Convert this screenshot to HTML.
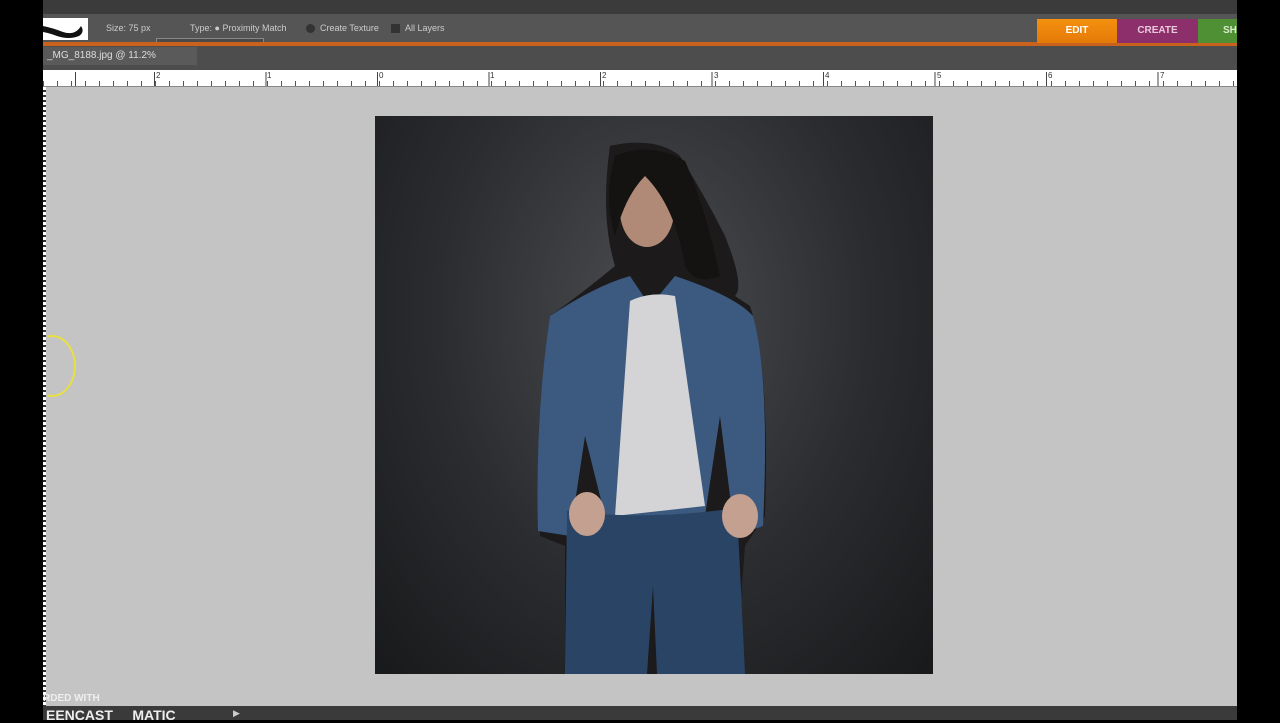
<!DOCTYPE html><html><head><style>
body{margin:0;width:1280px;height:720px;background:#000;position:relative;overflow:hidden;font-family:"Liberation Sans",sans-serif}
div{position:absolute}
.t{font-size:9px;color:#ccc;top:23px}
.n{font-size:8px;color:#333;top:71px}
</style></head><body>
<div style="left:43px;top:0;width:1194px;height:14px;background:#3b3b3b"></div>
<div style="left:43px;top:14px;width:1194px;height:28px;background:#555"></div>
<div style="left:43px;top:18px;width:45px;height:22px;background:#fff"></div>
<svg style="position:absolute;left:43px;top:18px" width="45" height="22"><path d="M0 8 Q10 10 20 14 Q32 18 38 8 Q42 14 36 18 Q26 22 14 18 Q6 15 0 14Z" fill="#111"/></svg>
<div class="t" style="left:106px">Size: 75 px</div>
<div style="left:156px;top:38px;width:106px;height:17px;border:1px solid #888;background:#4a4a4a"></div>
<div class="t" style="left:190px">Type: ● Proximity Match</div>
<div style="left:306px;top:24px;width:9px;height:9px;border-radius:50%;background:#333"></div>
<div class="t" style="left:320px">Create Texture</div>
<div style="left:391px;top:24px;width:9px;height:9px;background:#333"></div>
<div class="t" style="left:405px">All Layers</div>
<div style="left:43px;top:42px;width:1194px;height:4px;background:#c8621c"></div>
<div style="left:1037px;top:19px;width:80px;height:24px;background:linear-gradient(#f4900f,#e47a08);color:#fff;font-size:10px;font-weight:bold;text-align:center;line-height:24px">EDIT</div>
<div style="left:1117px;top:19px;width:81px;height:24px;background:#8d2f6a;color:#e8c8dc;font-size:10px;font-weight:bold;text-align:center;line-height:24px">CREATE</div>
<div style="left:1198px;top:19px;width:39px;height:24px;background:#4e9033;color:#d8eccd;font-size:10px;font-weight:bold;line-height:24px;padding-left:25px;box-sizing:border-box">SH</div>
<div style="left:43px;top:46px;width:1194px;height:24px;background:#4d4d4d"></div>
<div style="left:43px;top:47px;width:150px;height:18px;background:#5a5a5a;color:#ddd;font-size:10px;line-height:18px;padding-left:4px">_MG_8188.jpg @ 11.2%</div>
<div style="left:43px;top:70px;width:1194px;height:16px;background:#fff;border-bottom:1px solid #888"></div>
<div style="left:43px;top:81px;width:1194px;height:5px;background:repeating-linear-gradient(90deg,#555 0 1px,transparent 1px 14px)"></div>
<div style="left:43px;top:73px;width:1194px;height:13px;background:repeating-linear-gradient(90deg,transparent 0 劳,transparent 0);"></div>
<div style="left:43px;top:72px;width:1194px;height:14px;background:repeating-linear-gradient(90deg,#444 0 1px,transparent 1px 111.5px);background-position:111px 0"></div>
<div class="n" style="left:156px">2</div><div class="n" style="left:267px">1</div><div class="n" style="left:379px">0</div><div class="n" style="left:490px">1</div><div class="n" style="left:602px">2</div><div class="n" style="left:714px">3</div><div class="n" style="left:825px">4</div><div class="n" style="left:937px">5</div><div class="n" style="left:1048px">6</div><div class="n" style="left:1160px">7</div>
<div style="left:43px;top:87px;width:1194px;height:619px;background:#c4c4c4"></div>
<div style="left:43px;top:87px;width:3px;height:619px;background:repeating-linear-gradient(#fff 0 3px,#333 3px 5px)"></div>
<div style="left:375px;top:116px;width:558px;height:558px;background:radial-gradient(ellipse at 50% 35%,#4a4c50,#2b2c2f 55%,#18191b)"></div>
<svg style="position:absolute;left:375px;top:116px" width="558" height="558">
<path d="M235 30 Q280 20 305 40 Q330 80 350 120 Q370 170 360 180 L375 190 Q395 250 390 400 L370 430 L360 558 L190 558 L190 430 L165 420 Q160 300 175 200 Q210 175 240 150 Q225 100 235 30Z" fill="#1c1a1a"/>
<path d="M175 200 Q220 170 255 160 L275 190 L300 160 Q360 180 378 200 Q395 260 388 410 L360 420 L345 300 L330 400 L230 400 L210 320 L195 420 L163 415 Q160 300 175 200Z" fill="#3c5a80"/>
<path d="M255 185 Q275 175 300 180 L330 390 L240 400 Z" fill="#d4d4d6"/>
<path d="M192 395 Q270 405 362 392 L370 558 L282 558 L278 470 L272 558 L190 558 Z" fill="#2a4466"/>
<ellipse cx="212" cy="398" rx="18" ry="22" fill="#c4a090"/>
<ellipse cx="365" cy="400" rx="18" ry="22" fill="#c4a090"/>
<ellipse cx="272" cy="95" rx="27" ry="36" fill="#b08a76"/>
<path d="M240 40 Q275 25 310 45 Q330 90 345 160 Q320 170 310 150 Q300 90 270 60 Q250 80 240 120 Q228 80 240 40Z" fill="#151212"/>
</svg>
<div style="left:28px;top:335px;width:44px;height:58px;border:2px solid #e8e040;border-radius:50%;clip-path:inset(0 0 0 40%)"></div>
<div style="left:43px;top:706px;width:1194px;height:14px;background:#3a3a3a"></div>
<div style="left:43px;top:693px;color:#eee;font-size:10px;font-weight:bold">RDED WITH</div>
<div style="left:46px;top:707px;color:#eee;font-size:14px;font-weight:bold">EENCAST &nbsp; &nbsp; MATIC</div>
<div style="left:233px;top:708px;color:#ccc;font-size:9px">▶</div>
</body></html>
